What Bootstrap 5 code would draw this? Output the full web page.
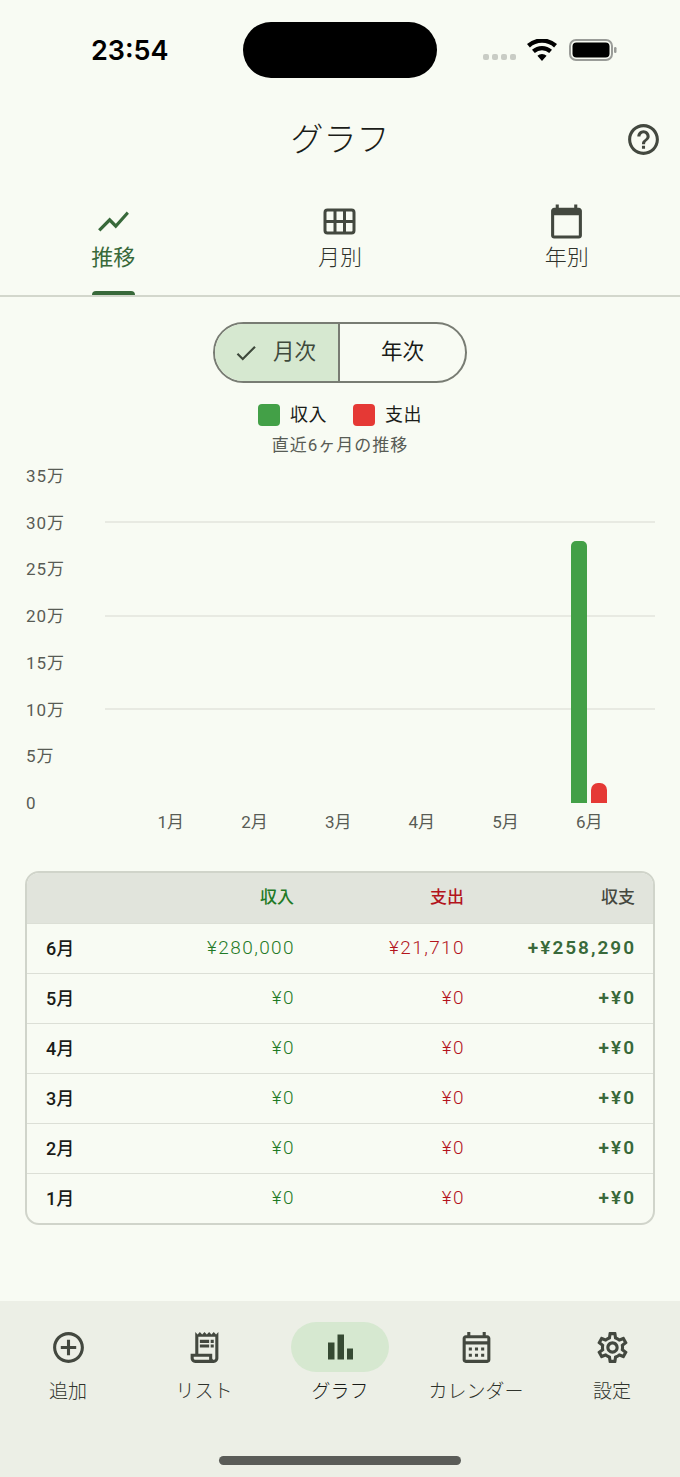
<!DOCTYPE html>
<html lang="ja">
<head>
    <meta charset="UTF-8">
    <meta name="viewport" content="width=device-width, initial-scale=1.0">
    <title>グラフ</title>
    <link href="https://cdn.jsdelivr.net/npm/bootstrap@5.3.0/dist/css/bootstrap.min.css" rel="stylesheet">
    <style>
        body {
            background-color: #f8fbf3;
            color: #1a1c18;
            font-family: Roboto, "Noto Sans CJK JP", sans-serif;
        }

        .app-screen {
            width: 680px;
            height: 1477px;
            overflow: hidden;
        }

        /* ステータスバー */
        .status-row {
            height: 100px;
            padding: 22px 63px 0 91px;
        }
        .status-time {
            width: 152px;
            height: 56px;
            line-height: 58px;
            font-family: Inter, "Liberation Sans", sans-serif;
            font-size: 27px;
            font-weight: 600;
            color: #000;
        }
        .island {
            width: 194px;
            height: 56px;
            background-color: #000;
            border-radius: 28px;
        }
        .status-icons {
            margin-left: auto;
            height: 56px;
        }
        .signal-dot {
            width: 6px;
            height: 6px;
            background-color: #c9ccc5;
            border-radius: 2px;
        }
        .signal-dots {
            gap: 3px;
            margin-top: 14px;
            margin-right: 11px;
        }
        .wifi-icon {
            margin-right: 12px;
        }

        /* ヘッダー */
        .title-row {
            height: 75px;
            position: relative;
        }
        .title-text {
            font-size: 33px;
            font-weight: 300;
            line-height: 79px;
            margin: 0;
        }
        .help-btn {
            position: absolute;
            right: 18px;
            top: 21px;
            line-height: 0;
        }

        /* タブ */
        .tab-strip {
            height: 122px;
            border-bottom: 2px solid #d3d7cc;
        }
        .tab-cell {
            position: relative;
            color: #2f332c;
            font-size: 22px;
            font-weight: 300;
        }
        .tab-cell.is-active {
            color: #38693a;
            font-weight: 400;
        }
        .tab-icon-box {
            height: 37px;
            margin-top: 28px;
        }
        .tab-label {
            line-height: 30px;
            margin-top: 3px;
        }
        .tab-marker {
            position: absolute;
            left: 92px;
            bottom: 0;
            width: 43px;
            height: 4px;
            background-color: #38693a;
            border-radius: 4px 4px 0 0;
        }

        /* 月次・年次 */
        .segment-box {
            width: 254px;
            height: 61px;
            margin-top: 25px;
            border: 2px solid #787c73;
            border-radius: 31px;
            overflow: hidden;
            font-size: 21.500px;
        }
        .segment-item {
            width: 50%;
        }
        .segment-item.is-on {
            background-color: #d6e8d0;
            border-right: 2px solid #787c73;
            color: #3f4a3c;
            gap: 14px;
            padding-right: 4px;
        }

        /* 凡例 */
        .legend-row {
            margin-top: 20px;
            height: 24px;
            font-size: 18px;
            line-height: 24px;
            gap: 26px;
            letter-spacing: .5px;
        }
        .legend-swatch {
            width: 22px;
            height: 22px;
            border-radius: 4px;
            margin-right: 10px;
        }
        .swatch-in { background-color: #43a047; }
        .swatch-out { background-color: #e53935; }
        .chart-caption {
            font-size: 17px;
            line-height: 24px;
            margin-top: 6px;
            color: #585c55;
            letter-spacing: 1px;
        }

        /* グラフ */
        .chart-wrap {
            margin-top: 9px;
            padding-left: 26px;
            padding-right: 25px;
        }
        .axis-col {
            width: 79px;
            height: 347px;
            font-size: 17px;
            line-height: 20px;
            color: #585c55;
            letter-spacing: 1px;
        }
        .plot-col {
            flex: 1;
            padding-top: 10px;
        }
        .plot-area {
            position: relative;
            height: 327px;
            padding: 0 24px;
        }
        .grid-line {
            position: absolute;
            left: 0;
            right: 0;
            height: 2px;
            margin-top: -1.500px;
            background-color: #e8eae2;
        }
        .month-slot {
            flex: 1;
            gap: 4px;
            position: relative;
        }
        .month-bar {
            width: 16px;
        }
        .bar-in {
            background-color: #43a047;
            border-radius: 5px 5px 0 0;
        }
        .bar-out {
            background-color: #e53935;
            border-radius: 7px 7px 0 0;
        }
        .month-row {
            padding: 8px 24px 0;
            font-size: 17px;
            line-height: 22px;
            color: #585c55;
        }

        /* 集計テーブル */
        .sum-box {
            margin: 38px 25px 0;
            border: 2px solid #d0d4ca;
            border-radius: 14px;
            overflow: hidden;
        }
        .sum-table {
            table-layout: fixed;
            margin: 0;
            --bs-table-bg: transparent;
            --bs-table-color: inherit;
            --bs-table-border-color: #dcdfd6;
            font-size: 19px;
            font-weight: 300;
        }
        .sum-table th,
        .sum-table td {
            height: 50px;
            padding: 0 19px 0 20px;
            vertical-align: middle;
            text-align: right;
            letter-spacing: 1.400px;
        }
        .sum-table thead th {
            background-color: #e1e4dc;
            font-size: 17px;
            font-weight: 500;
            color: #45483f;
            letter-spacing: 0;
            padding-right: 20px;
        }
        .sum-table tr:last-child td {
            border-bottom: 0;
        }
        .sum-table td.month-cell {
            text-align: left;
            font-size: 18px;
            font-weight: 500;
            letter-spacing: 0;
            color: #1a1c18;
            padding-left: 19px;
        }
        .sum-table .tx-in { color: #1f7a26; }
        .sum-table .tx-out { color: #b3141c; }
        .sum-table td.tx-net {
            color: #38693a;
            font-weight: 600;
            letter-spacing: 2px;
        }

        /* 下部ナビ */
        .bottom-nav {
            height: 176px;
            background-color: #ecefe6;
            position: relative;
        }
        .nav-cell {
            width: 136px;
            padding-top: 21px;
            color: #2f332c;
            font-size: 19px;
            font-weight: 300;
        }
        .nav-icon-box {
            width: 98px;
            height: 50px;
            border-radius: 25px;
        }
        .nav-cell.is-active .nav-icon-box {
            background-color: #d6e8d0;
        }
        .nav-cell.is-active {
            color: #1a1c18;
        }
        .nav-label {
            line-height: 24px;
            margin-top: 8px;
            white-space: nowrap;
        }
        .home-bar {
            position: absolute;
            left: 219px;
            top: 155px;
            width: 242px;
            height: 9px;
            border-radius: 5px;
            background-color: #5a5c58;
        }
    </style>
</head>
<body>
    <div class="app-screen d-flex flex-column">
        <div class="status-row d-flex align-items-start">
            <div class="status-time">23:54</div>
            <div class="island"></div>
            <div class="status-icons d-flex align-items-center">
                <div class="signal-dots d-flex">
                    <span class="signal-dot"></span><span class="signal-dot"></span><span class="signal-dot"></span><span class="signal-dot"></span>
                </div>
                <svg width="30" height="22" viewBox="0 0 30 22" class="wifi-icon"><path d="M15 22l-4.600-5.200a7 7 0 0 1 9.200 0zM7.800 13.900L5 10.700a15 15 0 0 1 20 0l-2.800 3.200a10.800 10.800 0 0 0-14.400 0zM2.900 8.400L0 5.100a22.600 22.600 0 0 1 30 0l-2.900 3.300a18.400 18.400 0 0 0-24.200 0z" fill="#000"/></svg>
                <svg width="48" height="22" viewBox="0 0 48 22"><rect x="1" y="1" width="42" height="20" rx="6" fill="none" stroke="#9a9c98" stroke-width="2"/><rect x="3.500" y="3.500" width="37" height="15" rx="4" fill="#000"/><rect x="45" y="8" width="2.500" height="6" rx="1.200" fill="#9a9c98"/></svg>
            </div>
        </div>

        <div class="title-row text-center">
            <h1 class="title-text">グラフ</h1>
            <div class="help-btn">
                <svg width="37" height="37" viewBox="0 0 24 24" fill="#43483f"><path d="M11 18h2v-2h-2v2zm1-16C6.480 2 2 6.480 2 12s4.480 10 10 10 10-4.480 10-10S17.520 2 12 2zm0 18c-4.410 0-8-3.590-8-8s3.590-8 8-8 8 3.590 8 8-3.590 8-8 8zm0-14c-2.210 0-4 1.790-4 4h2c0-1.100.9-2 2-2s2 .9 2 2c0 2-3 1.750-3 5h2c0-2.250 3-2.500 3-5 0-2.210-1.790-4-4-4z"/></svg>
            </div>
        </div>

        <div class="tab-strip row g-0 text-center">
            <div class="col-4 tab-cell is-active">
                <div class="tab-icon-box">
                    <svg width="37" height="37" viewBox="0 0 24 24" fill="#38693a"><path d="M3.500 18.490l6-6.010 4 4L22 6.920l-1.410-1.410-7.090 7.970-4-4L2 16.990z"/></svg>
                </div>
                <div class="tab-label">推移</div>
                <span class="tab-marker"></span>
            </div>
            <div class="col-4 tab-cell">
                <div class="tab-icon-box">
                    <svg width="37" height="37" viewBox="0 0 37 37"><rect x="4" y="7" width="29" height="23" rx="2.500" fill="none" stroke="#43483f" stroke-width="3"/><path d="M14 7v23M23.500 7v23M4 18.500h29" stroke="#43483f" stroke-width="3" fill="none"/></svg>
                </div>
                <div class="tab-label">月別</div>
            </div>
            <div class="col-4 tab-cell">
                <div class="tab-icon-box">
                    <svg width="37" height="37" viewBox="0 0 24 24" fill="#43483f"><path d="M20 3h-1V1h-2v2H7V1H5v2H4c-1.100 0-2 .9-2 2v16c0 1.100.9 2 2 2h16c1.100 0 2-.9 2-2V5c0-1.100-.9-2-2-2zm0 18H4V8h16v13z"/></svg>
                </div>
                <div class="tab-label">年別</div>
            </div>
        </div>

        <div class="segment-box d-flex mx-auto">
            <div class="segment-item is-on d-flex align-items-center justify-content-center">
                <svg width="26" height="26" viewBox="0 0 24 24" fill="#3f4a3c"><path d="M9 16.170L4.830 12l-1.420 1.410L9 19 21 7l-1.410-1.410z"/></svg>
                <span>月次</span>
            </div>
            <div class="segment-item d-flex align-items-center justify-content-center">年次</div>
        </div>

        <div class="legend-row d-flex justify-content-center">
            <div class="d-flex align-items-center"><span class="legend-swatch swatch-in"></span>収入</div>
            <div class="d-flex align-items-center"><span class="legend-swatch swatch-out"></span>支出</div>
        </div>
        <div class="chart-caption text-center">直近6ヶ月の推移</div>

        <div class="chart-wrap d-flex">
            <div class="axis-col d-flex flex-column justify-content-between">
                <span>35万</span><span>30万</span><span>25万</span><span>20万</span><span>15万</span><span>10万</span><span>5万</span><span>0</span>
            </div>
            <div class="plot-col">
                <div class="plot-area d-flex">
                    <span class="grid-line" style="top: 14.29%"></span>
                    <span class="grid-line" style="top: 42.86%"></span>
                    <span class="grid-line" style="top: 71.43%"></span>
                    <div class="month-slot"></div>
                    <div class="month-slot"></div>
                    <div class="month-slot"></div>
                    <div class="month-slot"></div>
                    <div class="month-slot"></div>
                    <div class="month-slot d-flex justify-content-center align-items-end">
                        <div class="month-bar bar-in" style="height: 262px"></div>
                        <div class="month-bar bar-out" style="height: 20px"></div>
                    </div>
                </div>
                <div class="month-row d-flex text-center">
                    <span class="flex-fill w-100">1月</span>
                    <span class="flex-fill w-100">2月</span>
                    <span class="flex-fill w-100">3月</span>
                    <span class="flex-fill w-100">4月</span>
                    <span class="flex-fill w-100">5月</span>
                    <span class="flex-fill w-100">6月</span>
                </div>
            </div>
        </div>

        <div class="sum-box">
            <table class="table sum-table">
                <colgroup>
                    <col style="width: 115px">
                    <col style="width: 172px">
                    <col style="width: 170px">
                    <col style="width: 171px">
                </colgroup>
                <thead>
                    <tr>
                        <th></th>
                        <th class="tx-in">収入</th>
                        <th class="tx-out">支出</th>
                        <th>収支</th>
                    </tr>
                </thead>
                <tbody>
                    <tr><td class="month-cell">6月</td><td class="tx-in">¥280,000</td><td class="tx-out">¥21,710</td><td class="tx-net">+¥258,290</td></tr>
                    <tr><td class="month-cell">5月</td><td class="tx-in">¥0</td><td class="tx-out">¥0</td><td class="tx-net">+¥0</td></tr>
                    <tr><td class="month-cell">4月</td><td class="tx-in">¥0</td><td class="tx-out">¥0</td><td class="tx-net">+¥0</td></tr>
                    <tr><td class="month-cell">3月</td><td class="tx-in">¥0</td><td class="tx-out">¥0</td><td class="tx-net">+¥0</td></tr>
                    <tr><td class="month-cell">2月</td><td class="tx-in">¥0</td><td class="tx-out">¥0</td><td class="tx-net">+¥0</td></tr>
                    <tr><td class="month-cell">1月</td><td class="tx-in">¥0</td><td class="tx-out">¥0</td><td class="tx-net">+¥0</td></tr>
                </tbody>
            </table>
        </div>

        <nav class="bottom-nav d-flex mt-auto text-center">
            <div class="nav-cell d-flex flex-column align-items-center">
                <div class="nav-icon-box d-flex align-items-center justify-content-center">
                    <svg width="37" height="37" viewBox="0 0 24 24" fill="#43483f"><path d="M13 7h-2v4H7v2h4v4h2v-4h4v-2h-4V7zm-1-5C6.480 2 2 6.480 2 12s4.480 10 10 10 10-4.480 10-10S17.520 2 12 2zm0 18c-4.410 0-8-3.590-8-8s3.590-8 8-8 8 3.590 8 8-3.590 8-8 8z"/></svg>
                </div>
                <div class="nav-label">追加</div>
            </div>
            <div class="nav-cell d-flex flex-column align-items-center">
                <div class="nav-icon-box d-flex align-items-center justify-content-center">
                    <svg width="37" height="37" viewBox="0 0 24 24" fill="#43483f"><path d="M19.500 3.500L18 2l-1.500 1.500L15 2l-1.500 1.500L12 2l-1.500 1.500L9 2 7.500 3.500 6 2v14H3v3c0 1.660 1.340 3 3 3h12c1.660 0 3-1.340 3-3V2l-1.500 1.500zM15 20H6c-.55 0-1-.45-1-1v-1h10v2zm4-1c0 .55-.45 1-1 1s-1-.45-1-1v-3H8V5h11v14z"/><path d="M9 7h6v2H9zm7 0h2v2h-2zM9 10h6v2H9zm7 0h2v2h-2z"/></svg>
                </div>
                <div class="nav-label">リスト</div>
            </div>
            <div class="nav-cell is-active d-flex flex-column align-items-center">
                <div class="nav-icon-box d-flex align-items-center justify-content-center">
                    <svg width="37" height="37" viewBox="0 0 37 37" fill="#364a33"><rect x="6" y="13.500" width="6.500" height="17"/><rect x="15.500" y="5.500" width="6.500" height="25"/><rect x="25" y="19.500" width="6" height="11"/></svg>
                </div>
                <div class="nav-label">グラフ</div>
            </div>
            <div class="nav-cell d-flex flex-column align-items-center">
                <div class="nav-icon-box d-flex align-items-center justify-content-center">
                    <svg width="37" height="37" viewBox="0 0 24 24" fill="#43483f"><path d="M19 4h-1V2h-2v2H8V2H6v2H5c-1.110 0-1.990.9-1.990 2L3 20c0 1.100.89 2 2 2h14c1.100 0 2-.9 2-2V6c0-1.100-.9-2-2-2zm0 16H5V10h14v10zm0-12H5V6h14v2zM9 14H7v-2h2v2zm4 0h-2v-2h2v2zm4 0h-2v-2h2v2zm-8 4H7v-2h2v2zm4 0h-2v-2h2v2zm4 0h-2v-2h2v2z"/></svg>
                </div>
                <div class="nav-label">カレンダー</div>
            </div>
            <div class="nav-cell d-flex flex-column align-items-center">
                <div class="nav-icon-box d-flex align-items-center justify-content-center">
                    <svg width="37" height="37" viewBox="0 0 24 24" fill="#43483f"><path d="M19.430 12.980c.04-.32.07-.64.07-.98 0-.34-.03-.66-.07-.98l2.110-1.650c.19-.15.24-.42.12-.64l-2-3.460c-.09-.16-.26-.25-.44-.25-.06 0-.12.01-.17.03l-2.490 1c-.52-.4-1.080-.73-1.690-.98l-.38-2.650C14.460 2.180 14.250 2 14 2h-4c-.25 0-.46.18-.49.42l-.38 2.650c-.61.25-1.170.59-1.690.98l-2.490-1c-.06-.02-.12-.03-.18-.03-.17 0-.34.09-.43.25l-2 3.460c-.13.22-.07.49.12.64l2.110 1.650c-.04.32-.07.65-.07.98 0 .33.03.66.07.98l-2.110 1.650c-.19.15-.24.42-.12.64l2 3.460c.09.16.26.25.44.25.06 0 .12-.01.17-.03l2.490-1c.52.4 1.080.73 1.690.98l.38 2.650c.03.24.24.42.49.42h4c.25 0 .46-.18.49-.42l.38-2.650c.61-.25 1.170-.59 1.690-.98l2.490 1c.06.02.12.03.18.03.17 0 .34-.09.43-.25l2-3.460c.12-.22.07-.49-.12-.64l-2.110-1.650zm-1.980-1.710c.04.31.05.52.05.73 0 .21-.02.43-.05.73l-.14 1.130.89.7 1.080.84-.7 1.210-1.270-.51-1.040-.42-.9.68c-.43.32-.84.56-1.250.73l-1.060.43-.16 1.130-.2 1.350h-1.400l-.19-1.350-.16-1.130-1.060-.43c-.43-.18-.83-.41-1.230-.71l-.91-.7-1.060.43-1.270.51-.7-1.210 1.080-.84.89-.7-.14-1.130c-.03-.31-.05-.54-.05-.74s.02-.43.05-.73l.14-1.130-.89-.7-1.080-.84.7-1.210 1.270.51 1.040.42.9-.68c.43-.32.84-.56 1.250-.73l1.060-.43.16-1.130.2-1.350h1.390l.19 1.350.16 1.130 1.060.43c.43.18.83.41 1.230.71l.91.7 1.060-.43 1.270-.51.7 1.210-1.070.85-.89.7.14 1.130zM12 8c-2.210 0-4 1.790-4 4s1.790 4 4 4 4-1.790 4-4-1.790-4-4-4zm0 6c-1.100 0-2-.9-2-2s.9-2 2-2 2 .9 2 2-.9 2-2 2z"/></svg>
                </div>
                <div class="nav-label">設定</div>
            </div>
            <span class="home-bar"></span>
        </nav>
    </div>
    <script src="https://cdn.jsdelivr.net/npm/bootstrap@5.3.0/dist/js/bootstrap.bundle.min.js"></script>
</body>
</html>
